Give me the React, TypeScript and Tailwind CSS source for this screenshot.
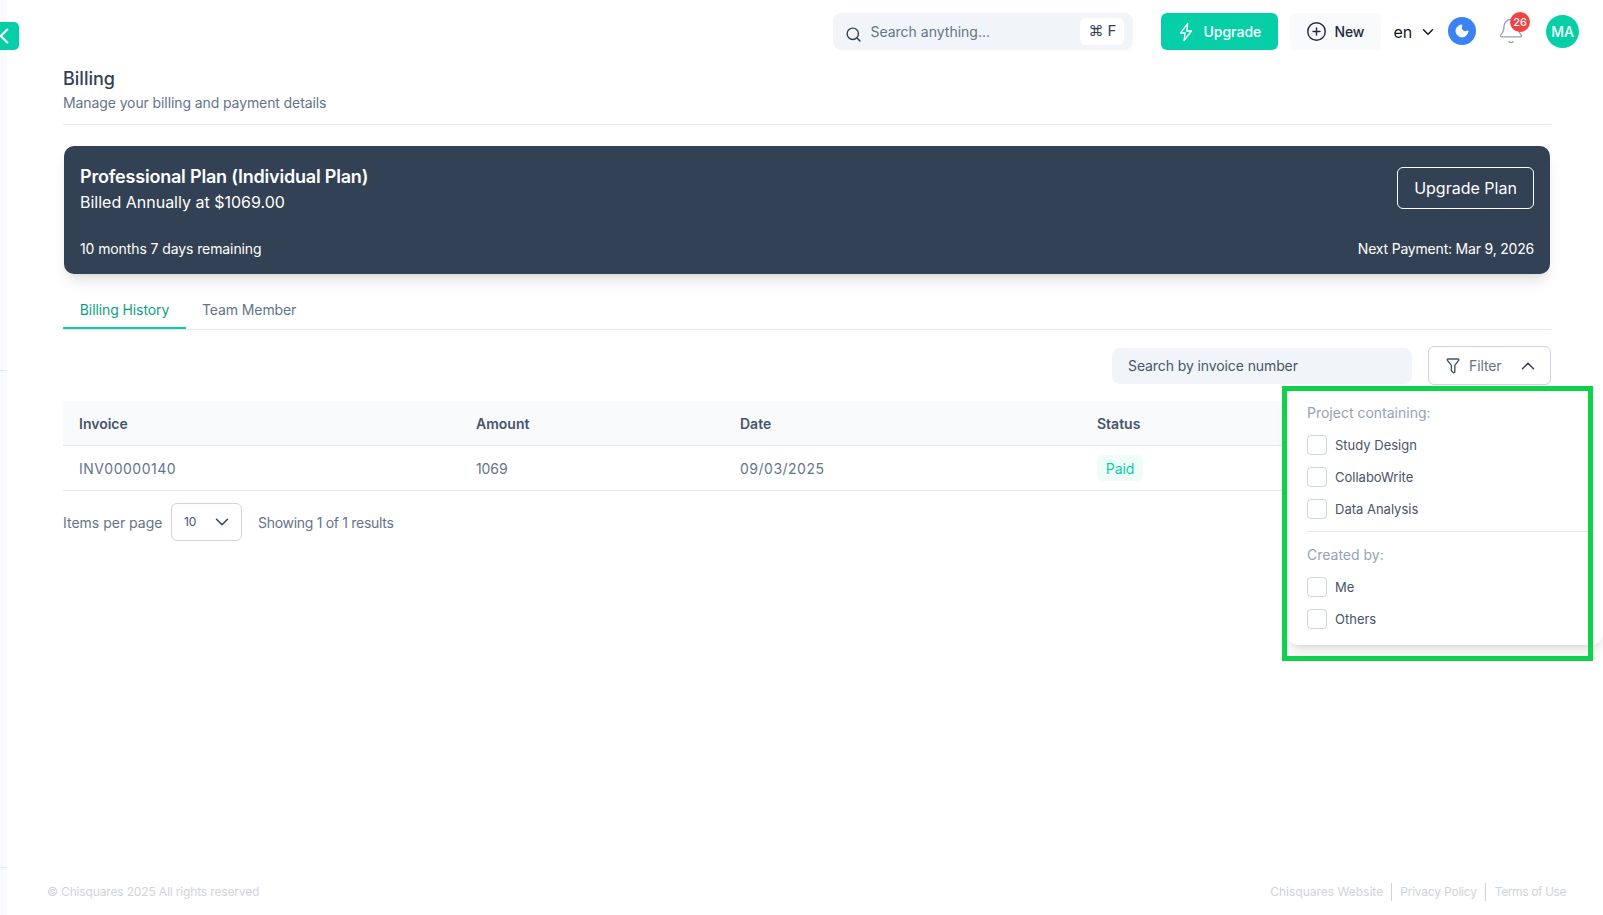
import { Search, CirclePlus, ChevronDown, ChevronUp, ChevronLeft, Moon, Bell } from "lucide-react";

function Check({ label }: { label: string }) {
  return (
    <label className="flex h-5 items-center gap-2">
      <span className="h-5 w-5 rounded border border-[#cbd5e1] bg-white" />
      <span className="pb-[1px] text-[13px] leading-5 tracking-normal text-[#475569]">{label}</span>
    </label>
  );
}

export default function App() {
  return (
    <div className="relative flex h-[915px] w-full overflow-hidden bg-white font-['Inter',sans-serif] tracking-[-0.1px]">
      <aside className="flex w-[7px] shrink-0 flex-col bg-[#f8fafc]">
        <div className="h-[371px] border-b border-[#e2e8f0]" />
        <div className="h-[497px] border-b border-[#e2e8f0]" />
      </aside>
      <button className="absolute left-0 top-[22px] flex h-7 w-[19px] items-center rounded-r-[5px] bg-[#06cfa8] text-white">
        <ChevronLeft size={26} strokeWidth={2} className="-ml-[9px] shrink-0" />
      </button>

      <main className="flex min-w-0 flex-1 flex-col">
        <header className="flex h-[63px] items-start justify-end pr-6 pt-[13px]">
          <div className="flex h-[37px] w-[300px] items-center rounded-lg bg-[#f1f5f9] pl-3 pr-[9px]">
            <Search size={17} strokeWidth={2} className="mt-[5px] text-[#334155]" />
            <span className="ml-2 text-[14px] tracking-normal text-[#64748b]">Search anything...</span>
            <span className="ml-auto flex h-[27px] w-[44px] items-center justify-center rounded-md bg-white text-[15px] text-[#334155]">⌘ F</span>
          </div>
          <button className="ml-7 flex h-[37px] w-[117px] items-center rounded-md bg-[#06cfa8] pl-[18px] text-[14px] font-medium tracking-normal text-white">
            <svg width="14" height="20" viewBox="0 0 14 20" fill="none" stroke="currentColor" strokeWidth="1.3" strokeLinejoin="round" strokeLinecap="round">
              <path d="M8.8 1.5 1.5 11h4.7L5 18.5 12.5 9H7.8z" />
            </svg>
            <span className="ml-[10px]">Upgrade</span>
          </button>
          <button className="ml-3 flex h-[37px] w-[91px] items-center rounded-md bg-[#f8fafc] pl-4 text-[14px] font-medium text-[#1e293b]">
            <CirclePlus size={21} strokeWidth={1.6} />
            <span className="ml-[7px]">New</span>
          </button>
          <div className="ml-3 flex h-[37px] items-center text-[16px] text-[#0f172a]">
            en
            <ChevronDown size={18} strokeWidth={2} className="ml-[7px]" />
          </div>
          <div className="ml-[11px] mt-1 flex h-7 w-7 items-center justify-center rounded-full bg-[#3b82f6] text-white">
            <Moon size={16} fill="currentColor" strokeWidth={1.5} />
          </div>
          <div className="relative ml-[21px] mt-1 flex h-7 w-7 items-center justify-center text-[#94a3b8]">
            <Bell size={28} strokeWidth={1.2} />
            <span className="absolute -top-[5px] left-[13px] flex h-5 w-5 items-center justify-center rounded-full bg-[#ef4444] text-[11px] font-medium text-white">26</span>
          </div>
          <div className="ml-[21px] mt-[2px] flex h-[33px] w-[33px] items-center justify-center rounded-full bg-[#06cfa8] text-[14px] font-medium text-white">MA</div>
        </header>

        <section className="ml-14 w-[1488px]">
          <div className="mt-[2px] border-b border-[#e2e8f0] pb-[11px]">
            <h1 className="text-[18px] font-medium leading-7 tracking-normal text-[#334155]">Billing</h1>
            <p className="text-[14px] leading-5 text-[#64748b]">Manage your billing and payment details</p>
          </div>

          <div className="ml-[1px] mt-[21px] flex h-[128px] w-[1486px] justify-between rounded-[10px] bg-[#334155] px-4 pb-[15px] pt-[17px] text-white shadow-lg">
            <div className="flex flex-col justify-between">
              <div>
                <div className="text-[18px] font-semibold leading-[27px] tracking-[-0.2px]">Professional Plan (Individual Plan)</div>
                <div className="text-[16px] leading-6 tracking-normal">Billed Annually at $1069.00</div>
              </div>
              <div className="text-[14px] leading-5">10 months 7 days remaining</div>
            </div>
            <div className="flex flex-col items-end justify-between">
              <button className="mt-[4px] flex h-[42px] w-[137px] items-center justify-center rounded-md border border-white text-[16px] tracking-normal">Upgrade Plan</button>
              <div className="text-[14px] leading-5 tracking-[-0.2px]">Next Payment: Mar 9, 2026</div>
            </div>
          </div>

          <div className="mt-4 flex border-b border-[#e2e8f0]">
            <div className="flex h-[39px] w-[123px] items-center justify-center border-b-2 border-[#06cfa8] pt-[2px] text-[14px] text-[#0d9f85]">Billing History</div>
            <div className="flex h-[39px] items-center px-4 text-[14px] text-[#64748b]">Team Member</div>
          </div>

          <div className="mt-4 flex h-[39px] items-center justify-end gap-4">
            <div className="flex h-9 w-[300px] items-center rounded-lg bg-[#f1f5f9] px-4 text-[14px] text-[#475569]">Search by invoice number</div>
            <div className="relative">
              <button className="flex h-[39px] w-[123px] items-center rounded-md border border-[#cbd5e1] pl-[17px] text-[14px] text-[#64748b]">
                <svg width="14" height="16" viewBox="0 0 14 16" fill="none" stroke="#475569" strokeWidth="1.4" strokeLinejoin="round" strokeLinecap="round">
                  <path d="M2 1h10c.7 0 1.1.8.6 1.4L8.8 7.4v6.4c0 .8-1 1.2-1.6.6L5.4 12.7V7.4L1.4 2.4C.9 1.8 1.3 1 2 1z" />
                </svg>
                <span className="ml-[9px]">Filter</span>
                <ChevronUp size={22} strokeWidth={1.6} className="ml-[15px] text-[#334155]" />
              </button>
              <div className="absolute left-[-141px] top-[45px] z-10 h-[254px] w-[316px] rounded-xl bg-white pl-5 pr-[14px] pt-3 shadow-lg">
                <div className="text-[14px] leading-5 tracking-normal text-[#94a3b8]">Project containing:</div>
                <div className="mt-3 flex flex-col gap-3">
                  <Check label="Study Design" />
                  <Check label="CollaboWrite" />
                  <Check label="Data Analysis" />
                </div>
                <div className="mt-3 border-t border-[#e2e8f0] pt-[13px] text-[14px] leading-5 tracking-normal text-[#94a3b8]">Created by:</div>
                <div className="mt-3 flex flex-col gap-3">
                  <Check label="Me" />
                  <Check label="Others" />
                </div>
              </div>
              <div className="pointer-events-none absolute left-[-146px] top-10 z-20 h-[275px] w-[311px] border-[5px] border-[#10d14b]" />
            </div>
          </div>

          <div className="mt-4">
            <div className="grid h-[45px] grid-cols-[397px_264px_357px_1fr] items-center border-b border-[#e2e8f0] bg-[#f8fafc] pl-4 text-[14px] font-semibold tracking-normal text-[#475569]">
              <div>Invoice</div>
              <div>Amount</div>
              <div>Date</div>
              <div>Status</div>
            </div>
            <div className="grid h-[45px] grid-cols-[397px_264px_357px_1fr] items-center border-b border-[#e2e8f0] pl-4 text-[14px] text-[#64748b]">
              <div className="tracking-[0.5px]">INV00000140</div>
              <div>1069</div>
              <div className="tracking-[0.5px]">09/03/2025</div>
              <div>
                <span className="inline-flex h-[26px] w-[46px] items-center justify-center rounded-md bg-[#effdf9] text-[#06cfa8]">Paid</span>
              </div>
            </div>
          </div>

          <div className="mt-3 flex items-center text-[14px] text-[#64748b]">
            <span className="w-[108px] tracking-normal">Items per page</span>
            <div className="flex h-[38px] w-[71px] items-center justify-between rounded-md border border-[#cbd5e1] pl-3 pr-2 text-[12px] text-[#475569]">
              10
              <ChevronDown size={22} strokeWidth={1.6} className="text-[#334155]" />
            </div>
            <span className="ml-4 tracking-[-0.3px]">Showing 1 of 1 results</span>
          </div>
        </section>

        <footer className="mb-[15px] mt-auto flex h-4 items-center justify-between pl-10 pr-[37px] text-[12px] tracking-[-0.15px] text-[#cbd5e1]">
          <span>© Chisquares 2025 All rights reserved</span>
          <div className="flex items-center">
            <span className="border-r border-[#cbd5e1] pr-2 tracking-normal">Chisquares Website</span>
            <span className="border-r border-[#cbd5e1] px-2 tracking-[-0.2px]">Privacy Policy</span>
            <span className="pl-[9px] tracking-[-0.4px]">Terms of Use</span>
          </div>
        </footer>
      </main>
    </div>
  );
}
